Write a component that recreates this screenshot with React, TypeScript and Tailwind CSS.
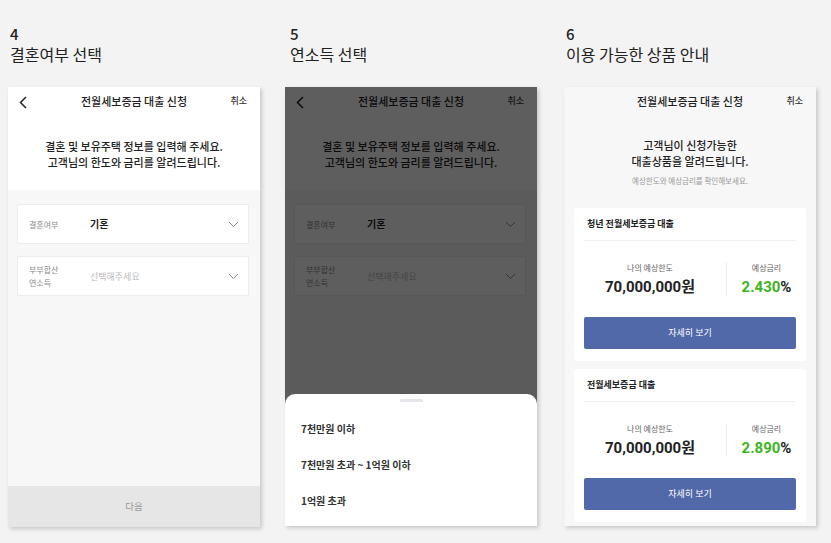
const font = { fontFamily: "'Noto Sans CJK KR', 'Noto Sans', sans-serif" };
const numFont = { fontFamily: "Roboto, 'Noto Sans CJK KR', sans-serif" };

function BackIcon() {
  return (
    <svg width="8" height="13" viewBox="0 0 8 13" fill="none">
      <path d="M7 1 L1.5 6.5 L7 12" stroke="#222" strokeWidth="1.5" />
    </svg>
  );
}

function ChevronDown() {
  return (
    <svg width="11" height="7" viewBox="0 0 11 7" fill="none">
      <path d="M1 1 L5.5 5.5 L10 1" stroke="#888" strokeWidth="1" />
    </svg>
  );
}

function Header({ back = true }: { back?: boolean }) {
  return (
    <div className="grid h-[28px] shrink-0 grid-cols-[40px_1fr_40px] items-center">
      <div className="pl-[11px] pt-[2px]">{back && <BackIcon />}</div>
      <div className="text-center text-[11px] font-medium text-[#222]">전월세보증금 대출 신청</div>
      <div className="pr-[13px] text-right text-[9px] font-medium text-[#333]">취소</div>
    </div>
  );
}

function SelectCard({ label, value, placeholder }: { label: string[]; value?: string; placeholder?: string }) {
  return (
    <div className="mx-[9px] mr-[11px] flex h-[40px] items-center border border-[#ececec] bg-white pl-[11px] pr-[9px]">
      <div className="w-[61px] text-[8px] leading-[13px] text-[#888]">
        {label.map((l) => (
          <div key={l}>{l}</div>
        ))}
      </div>
      <div className="flex-1 pb-[3px] leading-[13px]">
        {value ? (
          <span className="text-[10px] font-bold text-[#222]">{value}</span>
        ) : (
          <span className="text-[9px] text-[#bbb]">{placeholder}</span>
        )}
      </div>
      <ChevronDown />
    </div>
  );
}

function StepOneContent() {
  return (
    <>
      <div className="bg-white">
        <Header />
        <div className="mt-[23px] pb-[20px] text-center text-[11px] font-medium leading-[16px] text-[#222]">
          <div>결혼 및 보유주택 정보를 입력해 주세요.</div>
          <div>고객님의 한도와 금리를 알려드립니다.</div>
        </div>
      </div>
      <div className="flex flex-1 flex-col gap-[12px] bg-[#f7f7f7] pt-[14px]">
        <SelectCard label={["결혼여부"]} value="기혼" />
        <SelectCard label={["부부합산", "연소득"]} placeholder="선택해주세요" />
      </div>
      <div className="flex h-[41px] shrink-0 items-center justify-center bg-[#e6e6e6] text-[9.5px] text-[#999]">다음</div>
    </>
  );
}

function StepTitle({ n, title, offset }: { n: string; title: string; offset: string }) {
  return (
    <div className={`${offset} text-[#222]`}>
      <div className="text-[15px] font-medium leading-[16px]">{n}</div>
      <div className="mt-[3px] text-[16px] leading-[18px]">{title}</div>
    </div>
  );
}

function LoanCard({ name, rate }: { name: string; rate: string }) {
  return (
    <div className="rounded-[3px] bg-white px-[10px] pb-[12px]">
      <div className="border-b border-[#f0f0f0] px-[3px] pb-[10px] pt-[10px] text-[9px] font-bold leading-[12px] text-[#222]">
        {name}
      </div>
      <div className="mt-[21px] flex h-[34px]">
        <div className="w-[142px] pr-[10px] text-center">
          <div className="text-[8px] leading-[12px] text-[#666]">나의 예상한도</div>
          <div className="mt-[4px] text-[15px] font-bold leading-[18px] text-[#222]" style={numFont}>
            70,000,000원
          </div>
        </div>
        <div className="flex-1 border-l border-[#f0f0f0] pl-[10px] text-center">
          <div className="text-[8px] leading-[12px] text-[#666]">예상금리</div>
          <div className="mt-[4px] text-[15px] font-bold leading-[18px] text-[#222]" style={numFont}>
            <span className="text-[#3cb521]">{rate}</span>%
          </div>
        </div>
      </div>
      <div className="mt-[21px] flex h-[32px] items-center justify-center rounded-[2px] bg-[#5168a9] text-[9px] text-white">
        자세히 보기
      </div>
    </div>
  );
}

export default function App() {
  return (
    <div className="flex h-[543px] w-[831px] overflow-hidden bg-[#f3f3f3] pt-[26px]" style={font}>
      <div className="ml-[8px] w-[252px]">
        <StepTitle n="4" title="결혼여부 선택" offset="pl-[2px]" />
        <div className="mt-[24px] flex h-[440px] flex-col bg-white shadow-[2px_2px_4px_rgba(0,0,0,0.18)]">
          <StepOneContent />
        </div>
      </div>

      <div className="ml-[25px] w-[252px]">
        <StepTitle n="5" title="연소득 선택" offset="pl-[5px]" />
        <div className="relative mt-[24px] flex h-[439px] flex-col overflow-hidden bg-white shadow-[2px_2px_4px_rgba(0,0,0,0.18)]">
          <StepOneContent />
          <div className="absolute inset-0 bg-black/[0.63]" />
          <div className="absolute bottom-0 left-0 right-0 h-[132px] rounded-t-[10px] bg-white">
            <div className="mx-auto mt-[5px] h-[3px] w-[23px] rounded-full bg-[#e4e4ea]" />
            <div className="mt-[8px] pl-[16px] text-[10px] font-bold text-[#333]">
              <div className="flex h-[36px] items-center">7천만원 이하</div>
              <div className="flex h-[36px] items-center">7천만원 초과 ~ 1억원 이하</div>
              <div className="flex h-[36px] items-center">1억원 초과</div>
            </div>
          </div>
        </div>
      </div>

      <div className="ml-[27px] w-[252px]">
        <StepTitle n="6" title="이용 가능한 상품 안내" offset="pl-[2px]" />
        <div className="mt-[24px] flex h-[439px] flex-col overflow-hidden bg-[#f7f7f7] shadow-[2px_2px_4px_rgba(0,0,0,0.18)]">
          <Header back={false} />
          <div className="mt-[22px] text-center text-[11px] font-medium leading-[16px] text-[#222]">
            <div>고객님이 신청가능한</div>
            <div>대출상품을 알려드립니다.</div>
          </div>
          <div className="mt-[7px] text-center text-[7.5px] leading-[10px] text-[#999]">예상한도와 예상금리를 확인해보세요.</div>
          <div className="mt-[22px] flex flex-col gap-[8px] px-[10px]">
            <LoanCard name="청년 전월세보증금 대출" rate="2.430" />
            <LoanCard name="전월세보증금 대출" rate="2.890" />
          </div>
        </div>
      </div>
    </div>
  );
}
